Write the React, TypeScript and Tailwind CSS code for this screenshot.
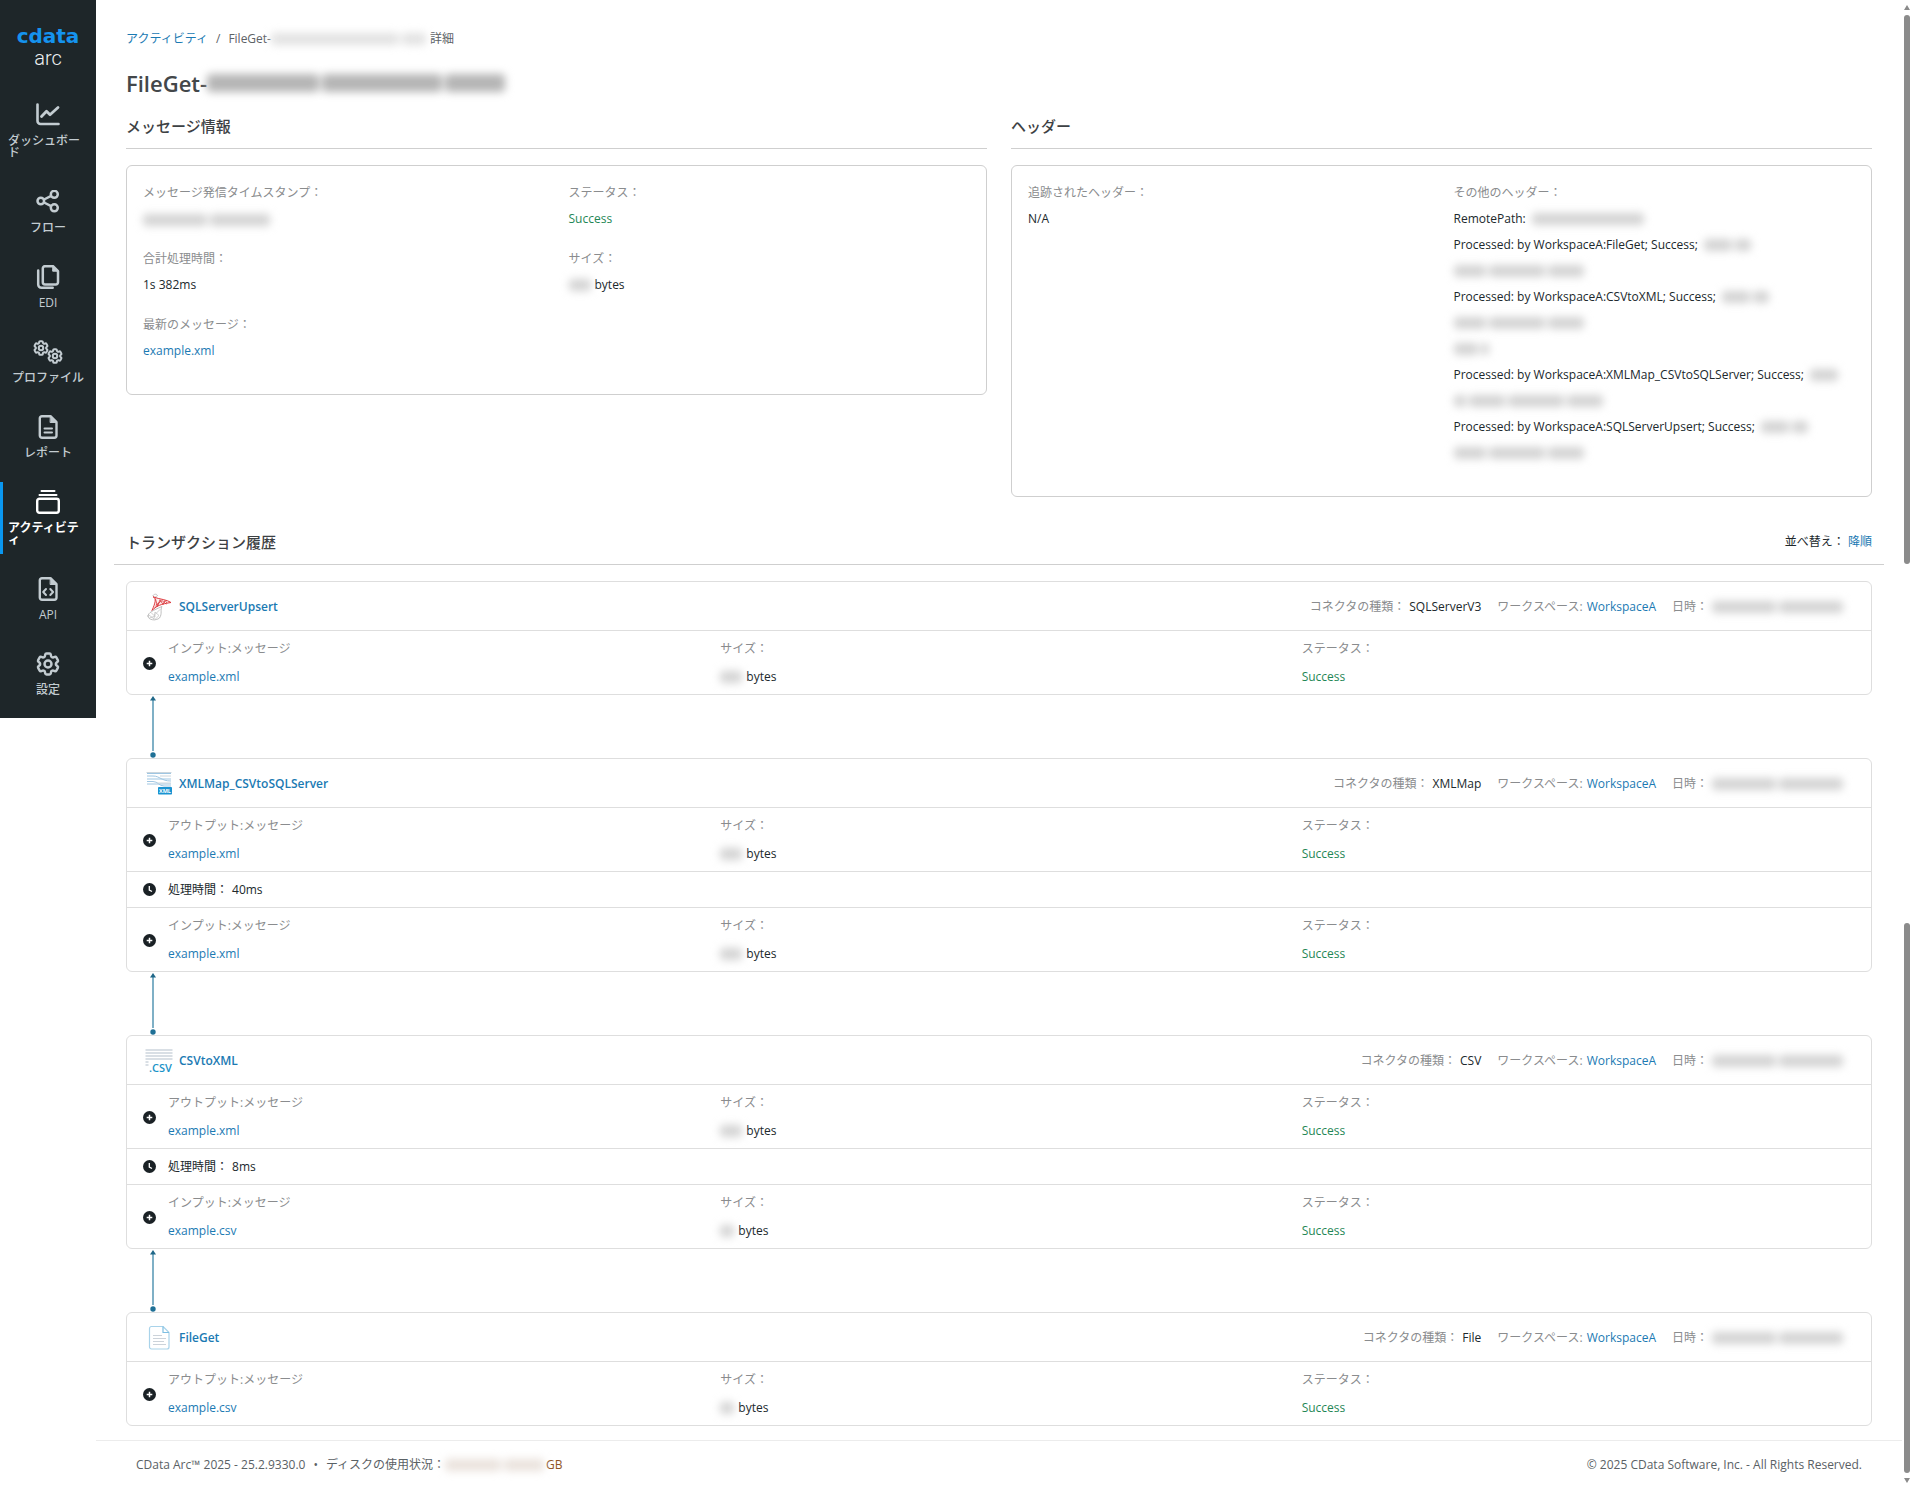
import React from 'react';
import clsx from 'clsx';
import { HiOutlineCog6Tooth } from 'react-icons/hi2';

type Message = {
  kind: 'message';
  label: string;
  file: string;
  sizeMask: string;
};

type Processing = {
  kind: 'processing';
  time: string;
};

type Transaction = {
  name: string;
  type: string;
  icon: React.ReactNode;
  rows: (Message | Processing)[];
};

/* Sidebar icons */

const DashboardIcon = () => (
  <svg viewBox="0 0 24 24" className="w-6 h-6" fill="none" stroke="currentColor" strokeLinecap="round" strokeLinejoin="round">
    <path d="M1.5 1.5V18a3 3 0 0 0 3 3h18" strokeWidth="2.6" />
    <path d="M5.5 13.5l5-5.2 3.500 3.4L22 4.5" strokeWidth="2.8" />
  </svg>
);

const FlowIcon = () => (
  <svg viewBox="0 0 24 24" className="w-6 h-6" fill="none" stroke="currentColor" strokeWidth="2.5">
    <circle cx="4.8" cy="11" r="3.3" />
    <circle cx="18.3" cy="4.3" r="3.5" />
    <circle cx="18.3" cy="17.8" r="3.5" />
    <path d="M8 9.500l7.200-3.700M8 12.500l7.200 3.700" />
  </svg>
);

const EdiIcon = () => (
  <svg viewBox="0 0 24 24" className="w-6 h-6" fill="none" stroke="currentColor" strokeWidth="2.5" strokeLinecap="round" strokeLinejoin="round">
    <path d="M9 1.2h8l5 5v11a2.2 2.2 0 0 1-2.2 2.2H9a2.2 2.2 0 0 1-2.2-2.2V3.4A2.2 2.2 0 0 1 9 1.2z" />
    <path d="M17 1.2l5 5h-5z" fill="currentColor" strokeWidth="1" />
    <path d="M2.2 5.5V19.500a3.200 3.200 0 0 0 3.200 3.200h11.300" />
  </svg>
);

const ProfileIcon = () => (
  <span className="flex h-6">
    <HiOutlineCog6Tooth className="w-[18px] h-[18px] shrink-0 -mt-px" strokeWidth={2.7} />
    <HiOutlineCog6Tooth className="w-[18px] h-[18px] shrink-0 mt-[7px] -ml-1" strokeWidth={2.7} />
  </span>
);

const FileShape = ({ children }: { children: React.ReactNode }) => (
  <svg viewBox="0 0 24 24" className="w-6 h-6" fill="none" stroke="currentColor" strokeWidth="2.4" strokeLinecap="round" strokeLinejoin="round">
    <path d="M6 1.2h8.500l6 6V20.500a2.2 2.2 0 0 1-2.2 2.2H6a2.2 2.2 0 0 1-2.2-2.2v-17A2.2 2.2 0 0 1 6 1.2z" />
    <path d="M14.5 1.5l6 6h-6z" fill="currentColor" strokeWidth="1" />
    {children}
  </svg>
);

const ReportIcon = () => (
  <FileShape>
    <path d="M8.5 13.500h7.500M8.500 17.500h7.500" strokeWidth="2" />
  </FileShape>
);

const ApiIcon = () => (
  <FileShape>
    <path d="M10 12l-2.8 3L10 18M14.300 12l2.800 3-2.800 3" strokeWidth="2" />
  </FileShape>
);

const ActivityIcon = () => (
  <svg viewBox="0 0 24 24" className="w-6 h-6" fill="none" stroke="currentColor" strokeWidth="2" strokeLinecap="round">
    <path d="M5.5 1h13M3.500 5h17" />
    <rect x="1.2" y="8.800" width="21.600" height="14" rx="2.200" strokeWidth="2.400" />
  </svg>
);

const SettingsIcon = () => <HiOutlineCog6Tooth className="w-7 h-7 -m-0.5" strokeWidth={2.1} />;

const menu = [
  { label: 'ダッシュボード', icon: <DashboardIcon /> },
  { label: 'フロー', icon: <FlowIcon /> },
  { label: 'EDI', icon: <EdiIcon /> },
  { label: 'プロファイル', icon: <ProfileIcon /> },
  { label: 'レポート', icon: <ReportIcon /> },
  { label: 'アクティビティ', icon: <ActivityIcon />, active: true },
  { label: 'API', icon: <ApiIcon /> },
  { label: '設定', icon: <SettingsIcon /> },
];

/* Connector icons */

const SqlServerIcon = () => (
  <svg viewBox="0 0 28 28" className="w-7 h-7" fill="none" strokeLinecap="round" strokeLinejoin="round">
    <path d="M8 2.5c1-1.8 4-1.8 4.5.2L10 4.2z" stroke="#b9b9b9" strokeWidth=".8" />
    <path d="M8.5 4c3 1.5 2 5.5-1.5 13.5 4-4.5 9-6.5 19-8-4-3-11-3-17.5-5.5z" stroke="#dd3a3f" strokeWidth="1" fill="#fdeeee" />
    <path d="M10.5 6l2 7.5L15 6.8l3 4.7 2-4 2 2.5M11 12l6-4.500 4 3.500M10 15l4-5" stroke="#d9363b" strokeWidth=".8" />
    <path d="M3 23c0-3.5 5-5.5 14-9.500-2 3.500.5 7-2.500 11.500C11 28 3 27.500 3 23z" stroke="#b0b0b0" strokeWidth=".8" />
    <path d="M4 22l5 4 1-7 4 3.500-4 4M6 19.500l3 3 6-6M4.500 25l6-2" stroke="#bdbdbd" strokeWidth=".7" />
  </svg>
);

const XmlMapIcon = () => (
  <svg viewBox="0 0 28 28" className="w-7 h-7" fill="none" strokeWidth="1">
    <path d="M2 3.5h24M2 6h6c7 0 8 5 18 5M2 9h24M2 14h24M2 11.500h6c5 0 6 4.500 11 4.500h7" stroke="#9fc6e2" />
    <path d="M1.5 2.500h25M15 6h11M12 13h14" stroke="#ccd6dd" />
    <rect x="13" y="17" width="14" height="7.5" rx=".8" fill="#1a93d1" />
    <text x="20" y="23" fill="#fff" fontSize="5.5" fontWeight="700" textAnchor="middle">XML</text>
  </svg>
);

const CsvIcon = () => (
  <svg viewBox="0 0 28 28" className="w-7 h-7" fill="none">
    <path d="M.5 3h27M.5 6h27M.5 9h27M.5 12h27M.5 15h3M.5 18h3" stroke="#d9dfe5" strokeWidth="1.8" />
    <text x="4" y="25" fill="#1a93c8" fontSize="11" fontWeight="600">.CSV</text>
  </svg>
);

const FileIcon = () => (
  <svg viewBox="0 0 28 28" className="w-7 h-7" fill="none" strokeLinejoin="round">
    <path d="M6 2.5h12l6 6V23a2 2 0 0 1-2 2H6.500a2 2 0 0 1-2-2V4.500a2 2 0 0 1 1.500-2z" stroke="#a9d3ea" strokeWidth="1.2" />
    <path d="M18 2.5v6h6" stroke="#7fbfe2" strokeWidth="1.2" />
    <path d="M8 11.5h9M8 14.500h13M8 17.500h11M8 20.500h13" stroke="#ccd3da" strokeWidth="1.1" />
  </svg>
);

const transactions: Transaction[] = [
  {
    name: 'SQLServerUpsert',
    type: 'SQLServerV3',
    icon: <SqlServerIcon />,
    rows: [{ kind: 'message', label: 'インプット:メッセージ', file: 'example.xml', sizeMask: 'w-[22px]' }],
  },
  {
    name: 'XMLMap_CSVtoSQLServer',
    type: 'XMLMap',
    icon: <XmlMapIcon />,
    rows: [
      { kind: 'message', label: 'アウトプット:メッセージ', file: 'example.xml', sizeMask: 'w-[22px]' },
      { kind: 'processing', time: '40ms' },
      { kind: 'message', label: 'インプット:メッセージ', file: 'example.xml', sizeMask: 'w-[22px]' },
    ],
  },
  {
    name: 'CSVtoXML',
    type: 'CSV',
    icon: <CsvIcon />,
    rows: [
      { kind: 'message', label: 'アウトプット:メッセージ', file: 'example.xml', sizeMask: 'w-[22px]' },
      { kind: 'processing', time: '8ms' },
      { kind: 'message', label: 'インプット:メッセージ', file: 'example.csv', sizeMask: 'w-[14px]' },
    ],
  },
  {
    name: 'FileGet',
    type: 'File',
    icon: <FileIcon />,
    rows: [{ kind: 'message', label: 'アウトプット:メッセージ', file: 'example.csv', sizeMask: 'w-[14px]' }],
  },
];

const otherHeaders = [
  { text: 'RemotePath:', masks: ['w-28'] },
  { text: 'Processed: by WorkspaceA:FileGet; Success;', masks: ['w-7', 'w-4'] },
  { text: '', masks: ['w-8', 'w-14', 'w-9'] },
  { text: 'Processed: by WorkspaceA:CSVtoXML; Success;', masks: ['w-7', 'w-4'] },
  { text: '', masks: ['w-8', 'w-14', 'w-9'] },
  { text: '', masks: ['w-6', 'w-2'] },
  { text: 'Processed: by WorkspaceA:XMLMap_CSVtoSQLServer; Success;', masks: ['w-7'] },
  { text: '', masks: ['w-3', 'w-9', 'w-14', 'w-9'] },
  { text: 'Processed: by WorkspaceA:SQLServerUpsert; Success;', masks: ['w-7', 'w-4'] },
  { text: '', masks: ['w-8', 'w-14', 'w-9'] },
];

/* Hidden value, drawn as soft grey bars */
const Mask = ({ widths, className = 'h-3 bg-[#d3d3d3]' }: { widths: string[]; className?: string }) => (
  <span aria-hidden="true" className="inline-flex items-center gap-[3px] align-middle blur-xs">
    {widths.map((width, i) => (
      <span key={i} className={clsx('rounded-sm', width, className)} />
    ))}
  </span>
);

const Field = ({ label, children }: { label: string; children: React.ReactNode }) => (
  <div className="px-3 mb-[14px] leading-[26px]">
    <dt className="text-[#8a8c8e]">{label}</dt>
    <dd>{children}</dd>
  </div>
);

const Link = ({ children, className }: { children: React.ReactNode; className?: string }) => (
  <a href="#" className={clsx('text-[#1b7ab3] hover:underline', className)}>
    {children}
  </a>
);

const Connector = () => (
  <svg viewBox="0 0 6 63" className="block w-[6px] h-[63px] ml-6" aria-hidden="true">
    <path d="M3 4v52" stroke="#7fb0c6" strokeWidth="2" />
    <path d="M3 1l3 4.5H0z" fill="#1f6788" />
    <circle cx="3" cy="60" r="2.7" fill="#1f7096" />
  </svg>
);

const MessageRow = ({ row }: { row: Message }) => (
  <div className="grid grid-cols-3 pt-1 pb-[3px] leading-7 border-t border-[#dedede]">
    <div className="flex items-center pl-4">
      <button aria-label="詳細を表示" className="w-[13px] h-[13px] mr-3">
        <svg viewBox="0 0 13 13" className="w-full h-full">
          <circle cx="6.5" cy="6.5" r="6.5" fill="#1a2125" />
          <path d="M6.5 3.7v5.6M3.7 6.5h5.6" stroke="#fff" strokeWidth="1.5" />
        </svg>
      </button>
      <div>
        <div className="text-[#8a8c8e]">{row.label}</div>
        <Link className="block">{row.file}</Link>
      </div>
    </div>
    <div className="px-3">
      <div className="text-[#8a8c8e]">サイズ：</div>
      <div className="flex items-center gap-1">
        <Mask widths={[row.sizeMask]} />
        bytes
      </div>
    </div>
    <div className="px-3">
      <div className="text-[#8a8c8e]">ステータス：</div>
      <div className="text-[#1f8756]">Success</div>
    </div>
  </div>
);

const ProcessingRow = ({ row }: { row: Processing }) => (
  <div className="flex items-center h-9 pl-4 border-t border-[#dedede]">
    <svg viewBox="0 0 13 13" className="w-[13px] h-[13px] mr-3">
      <circle cx="6.5" cy="6.5" r="6.5" fill="#1a2125" />
      <path d="M6.3 3v4l2.700 1.500" stroke="#fff" strokeWidth="1.3" fill="none" />
    </svg>
    <span className="mr-1">処理時間：</span>
    <span>{row.time}</span>
  </div>
);

const TransactionCard = ({ item }: { item: Transaction }) => (
  <article className="border border-[#dedede] rounded-md">
    <header className="flex items-center justify-between h-12 pt-0.5 pl-[18px] pr-7">
      <div className="flex items-center gap-1.5">
        {item.icon}
        <Link className="font-semibold">{item.name}</Link>
      </div>
      <div className="flex items-center gap-4">
        <span className="flex gap-1">
          <span className="text-[#8a8c8e]">コネクタの種類：</span>
          {item.type}
        </span>
        <span className="flex gap-1">
          <span className="text-[#8a8c8e]">ワークスペース:</span>
          <Link>WorkspaceA</Link>
        </span>
        <span className="flex items-center gap-1">
          <span className="text-[#8a8c8e]">日時：</span>
          <Mask widths={['w-16', 'w-16']} />
        </span>
      </div>
    </header>
    {item.rows.map((row, i) =>
      row.kind === 'message' ? <MessageRow key={i} row={row} /> : <ProcessingRow key={i} row={row} />
    )}
  </article>
);

const Sidebar = () => (
  <nav className="w-24 shrink-0 self-start bg-[#1e2629] pt-[26px] pb-[14px]">
    <div className="flex flex-col items-center h-[69px]">
      <span className="font-['DejaVu_Sans'] text-xl leading-5 font-bold text-[#1593ee]">cdata</span>
      <span className="font-[Roboto] text-xl leading-6 font-light text-[#eef1f2]">arc</span>
    </div>
    <ul className="flex flex-col gap-[15px]">
      {menu.map((item) => (
        <li key={item.label}>
          <a
            href="#"
            className={clsx(
              'flex flex-col items-center gap-2 px-2 py-2 text-xs leading-3 relative',
              item.active ? 'text-white font-semibold' : 'text-[#c3ccd1] font-medium'
            )}
          >
            {item.active && <span className="absolute left-0 inset-y-0 w-[3px] bg-[#0a97f0]" />}
            {item.icon}
            <span className="break-all">{item.label}</span>
          </a>
        </li>
      ))}
    </ul>
  </nav>
);

const Scrollbar = () => (
  <div aria-hidden="true" className="flex flex-col items-center w-[10px] shrink-0 py-[5px]">
    <svg viewBox="0 0 6 5" className="w-[6px] h-[5px] mb-[5px]">
      <path d="M3 0l3 5H0z" fill="#8a8a8a" />
    </svg>
    <span className="w-[6px] flex-[549] rounded-full bg-[#8b8b8b]" />
    <span className="flex-[358]" />
    <span className="w-[6px] flex-[550] rounded-full bg-[#8b8b8b]" />
    <svg viewBox="0 0 6 5" className="w-[6px] h-[5px] mt-[5px]">
      <path d="M3 5l3-5H0z" fill="#8a8a8a" />
    </svg>
  </div>
);

const App: React.FC = () => {
  return (
    <div className="flex min-h-screen bg-white text-xs text-[#20282c] font-['Open_Sans','Noto_Sans_CJK_JP',sans-serif]">
      <Sidebar />

      <div className="flex-1 min-w-0 flex flex-col">
        <main className="flex-1 px-[30px] pt-[29px]">
          <div className="flex items-center leading-5 text-[#5c6266]">
            <Link>アクティビティ</Link>
            <span className="mx-2">/</span>
            <span>FileGet-</span>
            <Mask widths={['w-32', 'w-6']} className="h-3 bg-[#e2e2e2]" />
            <span className="ml-1">詳細</span>
          </div>

          <h1 className="flex items-center mt-[18px] text-[22px] leading-8 font-semibold text-[#43474a]">
            FileGet-
            <Mask widths={['w-[112px]', 'w-[120px]', 'w-[60px]']} className="h-[18px] bg-[#b5b5b5]" />
          </h1>

          <div className="grid grid-cols-2 items-start gap-6 mt-[15px]">
            <section>
              <h2 className="mb-4 pb-[10px] text-[15px] leading-6 font-medium text-[#3d4144] border-b border-[#cfcfcf]">
                メッセージ情報
              </h2>
              <dl className="grid grid-cols-2 px-1 pt-[14px] pb-4 border border-[#cfcfcf] rounded-md">
                <Field label="メッセージ発信タイムスタンプ：">
                  <Mask widths={['w-16', 'w-[60px]']} />
                </Field>
                <Field label="ステータス：">
                  <span className="text-[#1f8756]">Success</span>
                </Field>
                <Field label="合計処理時間：">1s 382ms</Field>
                <Field label="サイズ：">
                  <span className="flex items-center gap-1">
                    <Mask widths={['w-[22px]']} />
                    bytes
                  </span>
                </Field>
                <Field label="最新のメッセージ：">
                  <Link>example.xml</Link>
                </Field>
              </dl>
            </section>

            <section>
              <h2 className="mb-4 pb-[10px] text-[15px] leading-6 font-medium text-[#3d4144] border-b border-[#cfcfcf]">
                ヘッダー
              </h2>
              <dl className="grid grid-cols-2 px-1 pt-[14px] pb-4 border border-[#cfcfcf] rounded-md">
                <Field label="追跡されたヘッダー：">N/A</Field>
                <Field label="その他のヘッダー：">
                  {otherHeaders.map((header, i) => (
                    <span key={i} className="flex items-center gap-1.5 h-[26px] whitespace-nowrap">
                      {header.text}
                      <Mask widths={header.masks} />
                    </span>
                  ))}
                </Field>
              </dl>
            </section>
          </div>

          <div className="flex items-center justify-between -mx-3 mt-[33px] mb-4 px-3 pb-[10px] leading-6 border-b border-[#cfcfcf]">
            <h2 className="text-[15px] leading-6 font-medium text-[#3d4144]">トランザクション履歴</h2>
            <div>
              並べ替え： <Link>降順</Link>
            </div>
          </div>

          {transactions.map((item, i) => (
            <React.Fragment key={item.name}>
              {i > 0 && <Connector />}
              <TransactionCard item={item} />
            </React.Fragment>
          ))}
        </main>

        <footer className="flex items-center justify-between h-12 mt-[13px] px-10 text-[#5a6165] border-t border-[#ececec]">
          <div className="flex items-center">
            CData Arc™ 2025 - 25.2.9330.0
            <span className="mx-2">•</span>
            ディスクの使用状況：
            <Mask widths={['w-14', 'w-10']} className="h-3 bg-[#eae2dc]" />
            <span className="ml-0.5 text-[#8f5527]">GB</span>
          </div>
          <div>© 2025 CData Software, Inc. - All Rights Reserved.</div>
        </footer>
      </div>

      <Scrollbar />
    </div>
  );
};

export default App;
